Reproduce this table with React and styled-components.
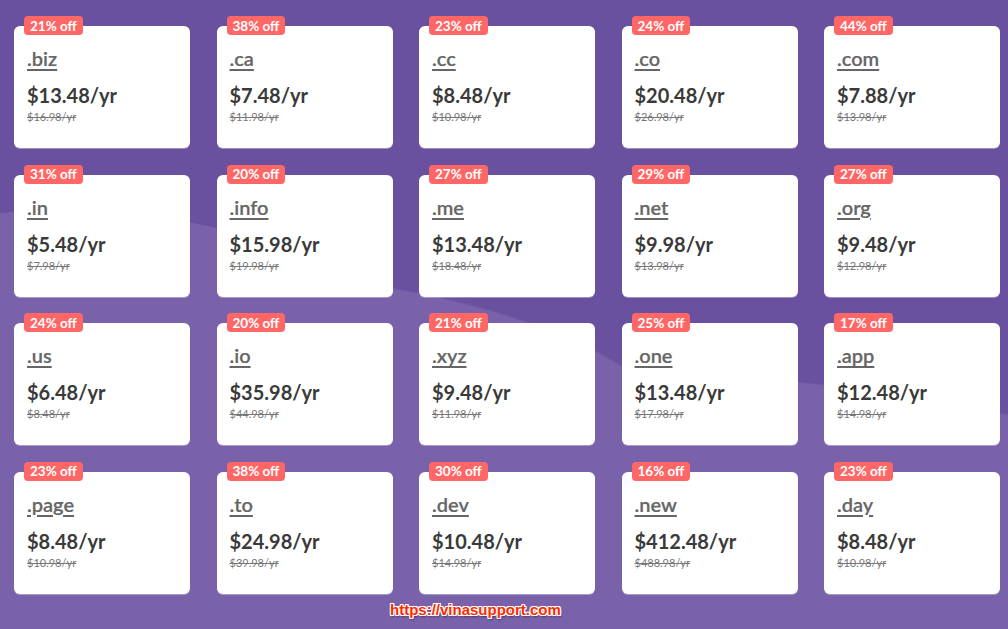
import React from 'react';
import styled, { createGlobalStyle } from 'styled-components';

const GlobalStyle = createGlobalStyle`
  html, body {
    margin: 0;
    padding: 0;
    width: 1008px;
    height: 629px;
    overflow: hidden;
  }
  body {
    font-family: 'Lato', 'Noto Sans', sans-serif;
  }
`;

const domains = [
  ['21% off', '.biz', '$13.48/yr', '$16.98/yr'],
  ['38% off', '.ca', '$7.48/yr', '$11.98/yr'],
  ['23% off', '.cc', '$8.48/yr', '$10.98/yr'],
  ['24% off', '.co', '$20.48/yr', '$26.98/yr'],
  ['44% off', '.com', '$7.88/yr', '$13.98/yr'],
  ['31% off', '.in', '$5.48/yr', '$7.98/yr'],
  ['20% off', '.info', '$15.98/yr', '$19.98/yr'],
  ['27% off', '.me', '$13.48/yr', '$18.48/yr'],
  ['29% off', '.net', '$9.98/yr', '$13.98/yr'],
  ['27% off', '.org', '$9.48/yr', '$12.98/yr'],
  ['24% off', '.us', '$6.48/yr', '$8.48/yr'],
  ['20% off', '.io', '$35.98/yr', '$44.98/yr'],
  ['21% off', '.xyz', '$9.48/yr', '$11.98/yr'],
  ['25% off', '.one', '$13.48/yr', '$17.98/yr'],
  ['17% off', '.app', '$12.48/yr', '$14.98/yr'],
  ['23% off', '.page', '$8.48/yr', '$10.98/yr'],
  ['38% off', '.to', '$24.98/yr', '$39.98/yr'],
  ['30% off', '.dev', '$10.48/yr', '$14.98/yr'],
  ['16% off', '.new', '$412.48/yr', '$488.98/yr'],
  ['23% off', '.day', '$8.48/yr', '$10.98/yr'],
];

const Page = styled.div`
  position: relative;
  width: 1008px;
  height: 629px;
  box-sizing: border-box;
  padding: 26px 0 0 14px;
  background-color: #6a51a0;
  background-image:
    radial-gradient(ellipse 520px 200px at 180px 470px, #7a62aa 99%, transparent 100%),
    radial-gradient(ellipse 700px 190px at 560px 560px, #7a62aa 99%, transparent 100%),
    radial-gradient(ellipse 300px 120px at 60px 330px, #7a62aa 99%, transparent 100%);
`;

const Grid = styled.div`
  display: grid;
  grid-template-columns: repeat(5, 176px);
  grid-auto-rows: 122px;
  column-gap: 26.5px;
  row-gap: 26.5px;
`;

const Card = styled.div`
  position: relative;
  background: #fff;
  border-radius: 6px;
  box-sizing: border-box;
  padding: 20px 13px 0;
  box-shadow: 0 1px 0 rgba(255, 255, 255, 0.35);
`;

const Badge = styled.span`
  position: absolute;
  top: -10px;
  left: 10px;
  height: 19px;
  padding: 0 6px;
  display: flex;
  align-items: center;
  background: #ff6767;
  color: #fff;
  font-size: 13.5px;
  font-weight: 700;
  border-radius: 4px;
  white-space: nowrap;
`;

const Tld = styled.a`
  display: inline-block;
  font-size: 20px;
  line-height: 24px;
  color: #666;
  text-decoration: underline;
  text-decoration-thickness: 2px;
  text-underline-offset: 3px;
  font-weight: 600;
  -webkit-text-stroke: 0.2px #666;
`;

const Price = styled.div`
  margin-top: 13px;
  font-size: 20px;
  line-height: 24px;
  font-weight: 700;
  color: #3a3a3a;
`;

const OldPrice = styled.div`
  margin-top: 3px;
  font-size: 11px;
  line-height: 14px;
  color: #777;
  text-decoration: line-through;
`;

const Watermark = styled.div`
  position: absolute;
  left: 390px;
  top: 601px;
  font-family: 'Liberation Sans', Arial, sans-serif;
  font-size: 15px;
  font-weight: 700;
  color: #ff2a00;
  text-shadow:
    -1px -1px 0 #fff, 1px -1px 0 #fff, -1px 1px 0 #fff, 1px 1px 0 #fff,
    0 -1px 0 #fff, 0 1px 0 #fff, -1px 0 0 #fff, 1px 0 0 #fff,
    1px 2px 2px rgba(0, 0, 0, 0.5);
`;

export default function App() {
  return (
    <>
      <GlobalStyle />
      <Page>
        <Grid>
          {domains.map(([off, tld, price, old]) => (
            <Card key={tld}>
              <Badge>{off}</Badge>
              <Tld>{tld}</Tld>
              <Price>{price}</Price>
              <OldPrice>{old}</OldPrice>
            </Card>
          ))}
        </Grid>
        <Watermark>https://vinasupport.com</Watermark>
      </Page>
    </>
  );
}
